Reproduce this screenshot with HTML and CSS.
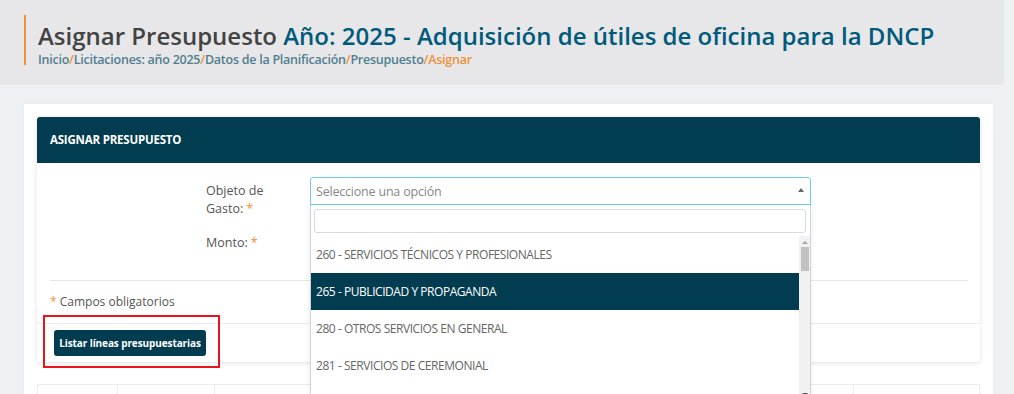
FILE: index.html
```html
<!DOCTYPE html>
<html lang="es">
<head>
    <meta charset="UTF-8">
    <meta name="viewport" content="width=device-width, initial-scale=1.0">
    <title>Asignar Presupuesto</title>
    <link rel="stylesheet" href="styles.css">
</head>
<body>
    <div class="page-header">
        <div class="title-block">
            <h1>Asignar Presupuesto <span class="subtitle">Año: 2025 - Adquisición de útiles de oficina para la DNCP</span></h1>
            <div class="breadcrumb">
                <a href="#">Inicio</a><span class="sep">/</span><a href="#">Licitaciones: año 2025</a><span class="sep">/</span><a href="#">Datos de la Planificación</a><span class="sep">/</span><a href="#">Presupuesto</a><span class="sep">/</span><span class="current">Asignar</span>
            </div>
        </div>
    </div>

    <div class="content">
        <div class="card">
            <div class="panel">
                <div class="panel-heading">ASIGNAR PRESUPUESTO</div>
                <div class="panel-body">
                    <div class="form-row">
                        <label class="form-label">Objeto de Gasto:<span class="req">*</span></label>
                        <div class="select-wrap">
                            <div class="select-box">
                                <span class="placeholder">Seleccione una opción</span>
                                <span class="arrow"></span>
                            </div>
                            <div class="dropdown">
                                <div class="search-wrap"><input type="text" class="search"></div>
                                <div class="options">
                                    <ul>
                                        <li>260 - SERVICIOS TÉCNICOS Y PROFESIONALES</li>
                                        <li class="active">265 - PUBLICIDAD Y PROPAGANDA</li>
                                        <li>280 - OTROS SERVICIOS EN GENERAL</li>
                                        <li>281 - SERVICIOS DE CEREMONIAL</li>
                                    </ul>
                                    <div class="scrollbar">
                                        <span class="sb-up"></span>
                                        <span class="sb-thumb"></span>
                                        <span class="sb-down"></span>
                                    </div>
                                </div>
                            </div>
                        </div>
                    </div>
                    <div class="form-row last">
                        <label class="form-label">Monto:<span class="req">*</span></label>
                        <div class="select-wrap"><input type="text" class="input"></div>
                    </div>
                    <hr>
                    <p class="note"><span class="req">*</span> Campos obligatorios</p>
                </div>
                <div class="panel-footer">
                    <div class="highlight">
                        <button class="btn">Listar líneas presupuestarias</button>
                    </div>
                </div>
            </div>

            <table class="lines">
                <tr>
                    <td class="c1"></td>
                    <td class="c2"></td>
                    <td></td>
                    <td class="c4"></td>
                </tr>
            </table>
        </div>
    </div>
</body>
</html>
```

FILE: styles.css
```css
body {
    margin: 0;
    font-family: "Open Sans", "Noto Sans", sans-serif;
    background-color: #eef1f4;
    height: 394px;
    overflow: hidden;
}
.page-header {
    background-color: #e7e7e9;
    height: 85px;
    padding: 15px 24px 0 24px;
    box-sizing: border-box;
    margin-right: 10px;
}
.title-block {
    border-left: 2px solid #f0913a;
    padding-left: 12px;
    height: 50px;
}
.title-block h1 {
    margin: 0;
    padding-top: 5px;
    font-size: 24px;
    font-weight: 600;
    color: #434343;
    line-height: 32px;
}
.subtitle {
    color: #005a7c;
}
.breadcrumb {
    font-size: 12.5px;
    font-weight: 600;
    color: #4f7f8f;
    line-height: 16px;
    letter-spacing: -0.25px;
}
.breadcrumb a {
    color: #4f7f8f;
    text-decoration: none;
}
.breadcrumb .sep,
.breadcrumb .current {
    color: #f0913a;
}
.content {
    padding: 19px 21px 0 24px;
}
.card {
    background-color: #fff;
    padding: 13px 13px 0 13px;
    box-shadow: 0 0 4px rgba(0,0,0,0.04);
    height: 300px;
}
.panel {
    box-shadow: 0 1px 5px rgba(0,0,0,0.12);
    border-radius: 3px;
}
.panel-heading {
    background-color: #023c50;
    color: #fff;
    font-size: 11.5px;
    font-weight: 700;
    height: 46px;
    line-height: 46px;
    padding-left: 13px;
    border-radius: 3px 3px 0 0;
    letter-spacing: -0.2px;
}
.panel-body {
    padding: 14px 12px 0 13px;
}
.form-row {
    display: grid;
    grid-template-columns: 104px 501px;
    padding-left: 156px;
    margin-bottom: 11px;
}
.form-row.last {
    margin-bottom: 23px;
}
.form-label {
    font-size: 12.5px;
    color: #555;
    line-height: 18px;
    padding-top: 5px;
    padding-right: 40px;
}
.req {
    color: #f0913a;
    margin-left: 3px;
}
.note .req {
    margin-left: 0;
}
.select-wrap {
    position: relative;
}
.select-box {
    height: 28px;
    border: 1px solid #6fcbe8;
    border-radius: 3px 3px 0 0;
    box-sizing: border-box;
    display: flex;
    align-items: center;
    justify-content: space-between;
    padding: 0 6px 0 5px;
}
.placeholder {
    font-size: 12.5px;
    color: #888;
    letter-spacing: -0.2px;
}
.arrow {
    width: 0;
    height: 0;
    border-left: 3px solid transparent;
    border-right: 3px solid transparent;
    border-bottom: 4px solid #666;
    margin-bottom: 2px;
}
.input {
    width: 100%;
    height: 28px;
    box-sizing: border-box;
    border: 1px solid #ddd;
    border-radius: 3px;
}
.dropdown {
    position: absolute;
    top: 28px;
    left: 0;
    right: 0;
    height: 200px;
    background-color: #fff;
    border: 1px solid #cfd4d8;
    border-top: none;
    z-index: 2;
    box-shadow: 0 3px 6px rgba(0,0,0,0.08);
}
.search-wrap {
    padding: 3px 4px 3px 3px;
}
.search {
    width: 100%;
    height: 24px;
    box-sizing: border-box;
    border: 1px solid #d6dbe0;
    border-radius: 3px;
}
.options {
    display: flex;
}
.options ul {
    list-style: none;
    margin: 0;
    padding: 0;
    flex: 1;
}
.options li {
    height: 37px;
    line-height: 37px;
    font-size: 12px;
    color: #666;
    padding-left: 5px;
    letter-spacing: -0.45px;
    white-space: nowrap;
}
.options li.active {
    background-color: #023c50;
    color: #fff;
}
.scrollbar {
    width: 11px;
    background-color: #f1f1f1;
    display: flex;
    flex-direction: column;
    align-items: center;
    height: 160px;
    position: relative;
}
.sb-up {
    width: 0;
    height: 0;
    border-left: 3px solid transparent;
    border-right: 3px solid transparent;
    border-bottom: 3px solid #a3a3a3;
    margin-top: 5px;
}
.sb-thumb {
    width: 8px;
    height: 24px;
    background-color: #c1c1c1;
    margin-top: 3px;
}
.sb-down {
    position: absolute;
    bottom: 0;
    width: 0;
    height: 0;
    border-left: 3px solid transparent;
    border-right: 3px solid transparent;
    border-top: 3px solid #505050;
}
hr {
    border: none;
    border-top: 1px solid #e6e6e6;
    margin: 0;
}
.note {
    margin: 0;
    padding: 12px 0 12px 0;
    font-size: 12px;
    color: #555;
    line-height: 18px;
}
.panel-footer {
    border-top: 1px solid #ececec;
    padding: 6px 0 6px 17px;
    display: flex;
}
.highlight {
    display: flex;
    position: relative;
}
.highlight::before {
    content: "";
    position: absolute;
    left: -11px;
    top: -15px;
    right: -14px;
    bottom: -12px;
    border: 2px solid #e8141c;
}
.btn {
    background-color: #023c50;
    color: #fff;
    font-family: "Open Sans", "Noto Sans", sans-serif;
    font-size: 10px;
    font-weight: 700;
    border: none;
    border-radius: 3px;
    height: 26px;
    width: 152px;
    padding: 0;
    letter-spacing: -0.1px;
}
.lines {
    margin-top: 22px;
    width: 100%;
    border-collapse: collapse;
    table-layout: fixed;
}
.lines td {
    border: 1px solid #ececec;
    height: 30px;
}
.lines .c1 { width: 77px; }
.lines .c2 { width: 94px; }
.lines .c4 { width: 123px; }
```
